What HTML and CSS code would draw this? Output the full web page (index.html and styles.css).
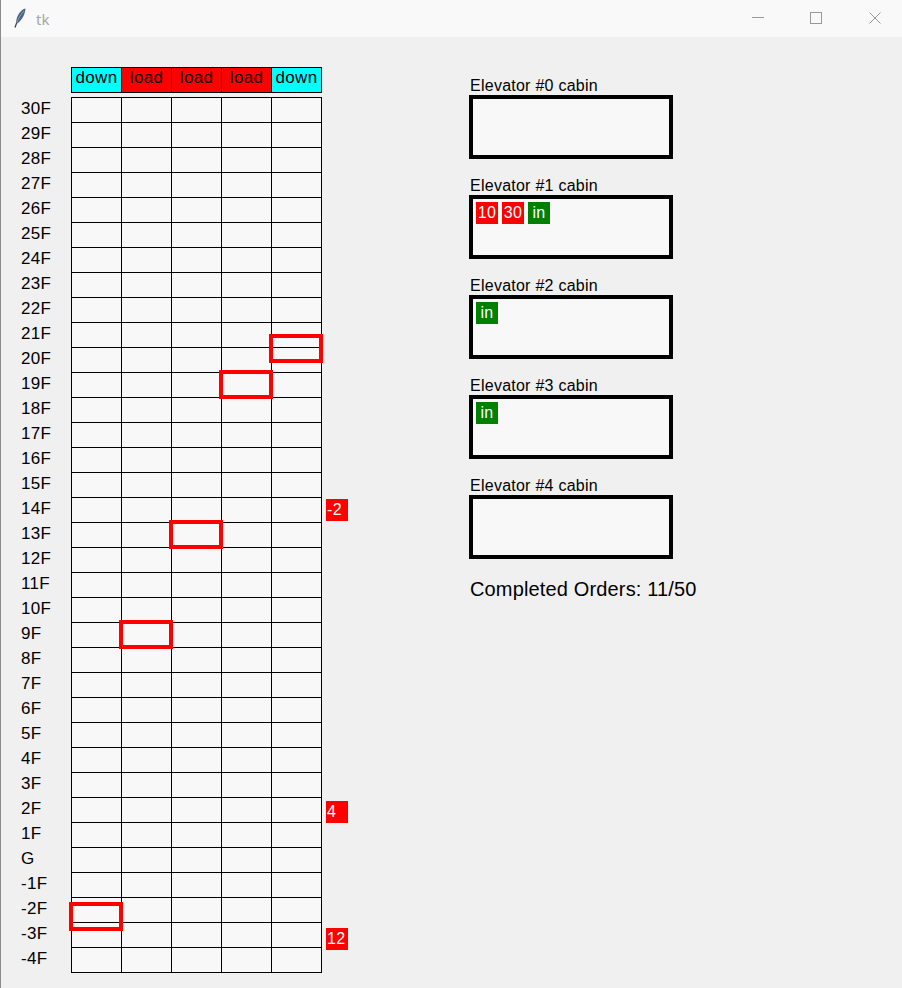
FILE: index.html
```html
<!DOCTYPE html>
<html lang="en">
<head>
<meta charset="utf-8">
<title>tk</title>
<link rel="stylesheet" href="styles.css">
</head>
<body>
<div class="window">
  <header class="titlebar">
    <div class="title">
      <svg class="feather" width="12" height="20" viewBox="0 0 12 20">
        <path d="M11.5 0.5 C7 1.5 2.5 7 2 15 L3.2 15.6 C8 12 11 6.5 11.5 0.5 Z" fill="#4d6186"/>
        <path d="M10 3 C7 6 4.5 10 3 14.5" stroke="#9fb0cc" stroke-width="0.8" fill="none"/>
        <path d="M2.6 15 L1 19.5" stroke="#3a3a3a" stroke-width="1.2"/>
      </svg>
      <span class="title-text">tk</span>
    </div>
    <div class="controls">
      <svg class="ctl ctl-min" width="12" height="12" viewBox="0 0 12 12"><path d="M0 5.5 H12" stroke="#999" stroke-width="1"/></svg>
      <svg class="ctl ctl-max" width="12" height="12" viewBox="0 0 12 12"><rect x="0.5" y="0.5" width="11" height="11" fill="none" stroke="#999" stroke-width="1"/></svg>
      <svg class="ctl ctl-close" width="12" height="12" viewBox="0 0 12 12"><path d="M0.5 0.5 L11.5 11.5 M11.5 0.5 L0.5 11.5" stroke="#999" stroke-width="1"/></svg>
    </div>
  </header>

  <main class="stage">
    <section class="shafts">
      <div class="shaft-head">
        <div class="head-cell down">down</div>
        <div class="head-cell load">load</div>
        <div class="head-cell load">load</div>
        <div class="head-cell load">load</div>
        <div class="head-cell down">down</div>
      </div>
      <div class="shaft-body">
        <ol class="floors">
          <li>30F</li><li>29F</li><li>28F</li><li>27F</li><li>26F</li>
          <li>25F</li><li>24F</li><li>23F</li><li>22F</li><li>21F</li>
          <li>20F</li><li>19F</li><li>18F</li><li>17F</li><li>16F</li>
          <li>15F</li><li>14F</li><li>13F</li><li>12F</li><li>11F</li>
          <li>10F</li><li>9F</li><li>8F</li><li>7F</li><li>6F</li>
          <li>5F</li><li>4F</li><li>3F</li><li>2F</li><li>1F</li>
          <li>G</li><li>-1F</li><li>-2F</li><li>-3F</li><li>-4F</li>
        </ol>
        <div class="grid">
          <span class="cell"></span><span class="cell"></span><span class="cell"></span><span class="cell"></span><span class="cell"></span>
          <span class="cell"></span><span class="cell"></span><span class="cell"></span><span class="cell"></span><span class="cell"></span>
          <span class="cell"></span><span class="cell"></span><span class="cell"></span><span class="cell"></span><span class="cell"></span>
          <span class="cell"></span><span class="cell"></span><span class="cell"></span><span class="cell"></span><span class="cell"></span>
          <span class="cell"></span><span class="cell"></span><span class="cell"></span><span class="cell"></span><span class="cell"></span>
          <span class="cell"></span><span class="cell"></span><span class="cell"></span><span class="cell"></span><span class="cell"></span>
          <span class="cell"></span><span class="cell"></span><span class="cell"></span><span class="cell"></span><span class="cell"></span>
          <span class="cell"></span><span class="cell"></span><span class="cell"></span><span class="cell"></span><span class="cell"></span>
          <span class="cell"></span><span class="cell"></span><span class="cell"></span><span class="cell"></span><span class="cell"></span>
          <span class="cell"></span><span class="cell"></span><span class="cell"></span><span class="cell"></span><span class="cell"></span>
          <span class="cell"></span><span class="cell"></span><span class="cell"></span><span class="cell"></span><span class="cell"></span>
          <span class="cell"></span><span class="cell"></span><span class="cell"></span><span class="cell"></span><span class="cell"></span>
          <span class="cell"></span><span class="cell"></span><span class="cell"></span><span class="cell"></span><span class="cell"></span>
          <span class="cell"></span><span class="cell"></span><span class="cell"></span><span class="cell"></span><span class="cell"></span>
          <span class="cell"></span><span class="cell"></span><span class="cell"></span><span class="cell"></span><span class="cell"></span>
          <span class="cell"></span><span class="cell"></span><span class="cell"></span><span class="cell"></span><span class="cell"></span>
          <span class="cell"></span><span class="cell"></span><span class="cell"></span><span class="cell"></span><span class="cell"></span>
          <span class="cell"></span><span class="cell"></span><span class="cell"></span><span class="cell"></span><span class="cell"></span>
          <span class="cell"></span><span class="cell"></span><span class="cell"></span><span class="cell"></span><span class="cell"></span>
          <span class="cell"></span><span class="cell"></span><span class="cell"></span><span class="cell"></span><span class="cell"></span>
          <span class="cell"></span><span class="cell"></span><span class="cell"></span><span class="cell"></span><span class="cell"></span>
          <span class="cell"></span><span class="cell"></span><span class="cell"></span><span class="cell"></span><span class="cell"></span>
          <span class="cell"></span><span class="cell"></span><span class="cell"></span><span class="cell"></span><span class="cell"></span>
          <span class="cell"></span><span class="cell"></span><span class="cell"></span><span class="cell"></span><span class="cell"></span>
          <span class="cell"></span><span class="cell"></span><span class="cell"></span><span class="cell"></span><span class="cell"></span>
          <span class="cell"></span><span class="cell"></span><span class="cell"></span><span class="cell"></span><span class="cell"></span>
          <span class="cell"></span><span class="cell"></span><span class="cell"></span><span class="cell"></span><span class="cell"></span>
          <span class="cell"></span><span class="cell"></span><span class="cell"></span><span class="cell"></span><span class="cell"></span>
          <span class="cell"></span><span class="cell"></span><span class="cell"></span><span class="cell"></span><span class="cell"></span>
          <span class="cell"></span><span class="cell"></span><span class="cell"></span><span class="cell"></span><span class="cell"></span>
          <span class="cell"></span><span class="cell"></span><span class="cell"></span><span class="cell"></span><span class="cell"></span>
          <span class="cell"></span><span class="cell"></span><span class="cell"></span><span class="cell"></span><span class="cell"></span>
          <span class="cell"></span><span class="cell"></span><span class="cell"></span><span class="cell"></span><span class="cell"></span>
          <span class="cell"></span><span class="cell"></span><span class="cell"></span><span class="cell"></span><span class="cell"></span>
          <span class="cell"></span><span class="cell"></span><span class="cell"></span><span class="cell"></span><span class="cell"></span>
          <div class="car car-0"></div>
          <div class="car car-1"></div>
          <div class="car car-2"></div>
          <div class="car car-3"></div>
          <div class="car car-4"></div>
        </div>
        <ul class="calls">
          <li></li><li></li><li></li><li></li><li></li>
          <li></li><li></li><li></li><li></li><li></li>
          <li></li><li></li><li></li><li></li><li></li>
          <li></li><li><span class="badge">-2</span></li><li></li><li></li><li></li>
          <li></li><li></li><li></li><li></li><li></li>
          <li></li><li></li><li></li><li><span class="badge">4</span></li><li></li>
          <li></li><li></li><li></li><li><span class="badge">12</span></li><li></li>
        </ul>
      </div>
    </section>

    <aside class="cabins">
      <div class="cabin">
        <div class="cabin-label">Elevator #0 cabin</div>
        <div class="cabin-box"></div>
      </div>
      <div class="cabin">
        <div class="cabin-label">Elevator #1 cabin</div>
        <div class="cabin-box"><span class="chip red">10</span><span class="chip red">30</span><span class="chip green">in</span></div>
      </div>
      <div class="cabin">
        <div class="cabin-label">Elevator #2 cabin</div>
        <div class="cabin-box"><span class="chip green">in</span></div>
      </div>
      <div class="cabin">
        <div class="cabin-label">Elevator #3 cabin</div>
        <div class="cabin-box"><span class="chip green">in</span></div>
      </div>
      <div class="cabin">
        <div class="cabin-label">Elevator #4 cabin</div>
        <div class="cabin-box"></div>
      </div>
      <p class="completed">Completed Orders: 11/50</p>
    </aside>
  </main>
</div>
</body>
</html>
```

FILE: styles.css
```css
html, body {
  margin: 0;
  padding: 0;
}

body {
  background: #f0f0f0;
  font-family: "Liberation Sans", Arial, sans-serif;
  color: #000;
}

.window {
  width: 902px;
  height: 988px;
  box-sizing: border-box;
  border-left: 1px solid #8c8c8c;
  overflow: hidden;
  background: #f0f0f0;
}

/* ---------- title bar ---------- */
.titlebar {
  height: 37px;
  background: #f9f9f9;
  display: flex;
  justify-content: space-between;
  align-items: flex-start;
}

.title {
  display: flex;
  align-items: center;
  height: 37px;
  padding-left: 13px;
}

.feather {
  display: block;
  margin-top: -1px;
}

.title-text {
  margin-left: 10px;
  font-family: "Noto Sans", "Liberation Sans", sans-serif;
  font-size: 15px;
  color: #a6a6a6;
  line-height: 17px;
  margin-top: 1px;
}

.controls {
  display: flex;
  padding-top: 12px;
  padding-right: 21px;
}

.ctl {
  display: block;
}

.ctl-min {
  margin-right: 46px;
}

.ctl-max {
  margin-right: 47px;
}

/* ---------- main stage ---------- */
.stage {
  display: flex;
  align-items: flex-start;
  padding-top: 30px;
}

.shafts {
  margin-left: 20px;
}

.shaft-head {
  display: flex;
  width: fit-content;
  margin-left: 50px;
  margin-bottom: 4px;
  border-top: 1px solid #000;
  border-left: 1px solid #000;
}

.head-cell {
  width: 50px;
  height: 25px;
  box-sizing: border-box;
  border-right: 1px solid #000;
  border-bottom: 1px solid #000;
  text-align: center;
  font-size: 17px;
  line-height: 20px;
  padding-bottom: 4px;
  letter-spacing: 0.3px;
  white-space: nowrap;
}

.head-cell.down {
  background: #00ffff;
}

.head-cell.load {
  background: #ff0000;
}

.shaft-body {
  display: flex;
  align-items: flex-start;
}

.floors {
  list-style: none;
  margin: 0;
  padding: 0;
  width: 50px;
}

.floors li {
  height: 25px;
  line-height: 23px;
  font-size: 17px;
  letter-spacing: 0.3px;
}

.grid {
  position: relative;
  display: grid;
  grid-template-columns: repeat(5, 50px);
  grid-auto-rows: 25px;
  border-top: 1px solid #000;
  border-left: 1px solid #000;
}

.cell {
  box-sizing: border-box;
  border-right: 1px solid #000;
  border-bottom: 1px solid #000;
  background: #f8f8f8;
}

/* elevator cars: placed on the shaft canvas */
.car {
  position: absolute;
  width: 54px;
  height: 29px;
  box-sizing: border-box;
  border: 4px solid #ff0000;
}

.car-0 { left: -3px;  top: 804px; }
.car-1 { left: 47px;  top: 522px; }
.car-2 { left: 97px;  top: 422px; }
.car-3 { left: 147px; top: 272px; }
.car-4 { left: 197px; top: 236px; }

.calls {
  list-style: none;
  margin: 0 0 0 4px;
  padding: 0;
  width: 22px;
}

.calls li {
  height: 25px;
}

.badge {
  display: block;
  margin-top: 2px;
  width: 22px;
  height: 22px;
  box-sizing: border-box;
  padding-left: 1px;
  background: #ff0000;
  color: #fff;
  font-size: 16px;
  line-height: 22px;
  letter-spacing: 0.3px;
}

/* ---------- cabins ---------- */
.cabins {
  margin-left: 121px;
  margin-top: 10px;
}

.cabin-label {
  font-size: 16px;
  line-height: 18px;
  padding-left: 1px;
  letter-spacing: 0.25px;
}

.cabin-box {
  width: 204px;
  height: 64px;
  box-sizing: border-box;
  border: 4px solid #000;
  background: #f8f8f8;
  padding: 3px;
  display: flex;
  align-items: flex-start;
  gap: 4px;
  margin-bottom: 18px;
}

.chip {
  width: 22px;
  height: 22px;
  line-height: 22px;
  text-align: center;
  color: #fff;
  font-size: 16px;
  letter-spacing: 0.3px;
}

.chip.red {
  background: #ff0000;
}

.chip.green {
  background: #008000;
}

.completed {
  margin: 0;
  padding-left: 1px;
  font-size: 20px;
  line-height: 24px;
  letter-spacing: 0.15px;
}
```
